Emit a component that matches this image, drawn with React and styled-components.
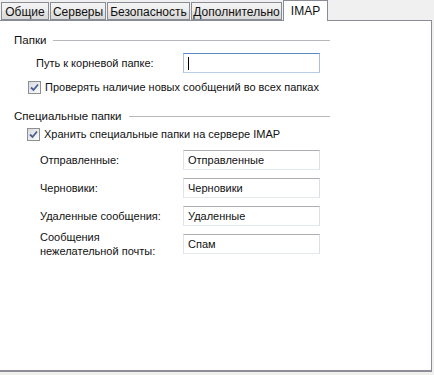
import styled, { createGlobalStyle } from "styled-components";

const GlobalStyle = createGlobalStyle`
  html, body {
    margin: 0;
    padding: 0;
    background: #f0f0f0;
  }
  body {
    font-family: "Liberation Sans", Arial, sans-serif;
    font-size: 11px;
    color: #111;
  }
`;

const Window = styled.div`
  width: 434px;
  height: 375px;
  background: #f0f0f0;
  display: flex;
  flex-direction: column;
`;

const TabStrip = styled.div`
  display: flex;
  align-items: flex-end;
  height: 20px;
  padding-left: 1px;
  position: relative;
  z-index: 1;
`;

const Tab = styled.div`
  box-sizing: border-box;
  width: ${(p) => p.$w}px;
  height: ${(p) => (p.$active ? 21 : 18)}px;
  margin-right: ${(p) => (p.$active ? 0 : 1)}px;
  border: 1px solid #898c95;
  border-bottom: ${(p) => (p.$active ? "none" : "1px solid #898c95")};
  background: ${(p) =>
    p.$active ? "#fff" : "linear-gradient(#f4f4f4, #ededed 50%, #e4e4e4 51%, #dadada)"};
  display: flex;
  align-items: center;
  justify-content: center;
  padding-top: ${(p) => (p.$active ? 0 : 1)}px;
  margin-bottom: ${(p) => (p.$active ? -1 : 0)}px;
  font-size: 12px;
  white-space: nowrap;
`;

const Panel = styled.div`
  box-sizing: border-box;
  width: 432px;
  height: 352px;
  background: #fff;
  border: 1px solid #898c95;
  border-left: none;
  border-bottom: 2px solid #8e8f96;
  padding: 12px 0 0 14px;
`;

const Group = styled.section`
  display: flex;
  flex-direction: column;
  width: 316px;
  margin-bottom: ${(p) => p.$mb || 0}px;
`;

const GroupHeader = styled.div`
  display: flex;
  align-items: center;
  gap: 7px;
  height: 14px;
  font-size: 11.5px;
  white-space: nowrap;

  &::after {
    content: "";
    flex: 1;
    height: 1px;
    background: #b5b8bd;
  }
`;

const FieldGrid = styled.div`
  display: grid;
  grid-template-columns: ${(p) => p.$labelW}px 137px;
  grid-auto-rows: 20px;
  row-gap: 8px;
  padding-left: ${(p) => p.$indent}px;
  margin-top: ${(p) => p.$mt || 0}px;
  align-items: center;
`;

const Label = styled.label`
  line-height: 14px;
  white-space: nowrap;
`;

const TextBox = styled.div`
  box-sizing: border-box;
  height: 20px;
  border: 1px solid ${(p) => (p.$focused ? "#7da2ce" : "#abadb3")};
  border-top-color: ${(p) => (p.$focused ? "#5c8ac4" : "#abadb3")};
  border-left-color: ${(p) => (p.$focused ? "#a4c0e2" : "#e2e3ea")};
  border-right-color: ${(p) => (p.$focused ? "#a4c0e2" : "#dbdfe6")};
  border-bottom-color: ${(p) => (p.$focused ? "#b5cfe7" : "#e3e9ef")};
  background: #fff;
  padding-left: 4px;
  display: flex;
  align-items: center;
`;

const Caret = styled.span`
  width: 1px;
  height: 13px;
  background: #000;
`;

const CheckRow = styled.div`
  display: flex;
  align-items: center;
  gap: 4px;
  height: 14px;
  padding-left: ${(p) => p.$indent}px;
  margin-top: ${(p) => p.$mt}px;
  white-space: nowrap;
`;

const Box = styled.span`
  box-sizing: border-box;
  width: 13px;
  height: 13px;
  border: 1px solid #8e8f8f;
  background: linear-gradient(135deg, #d8dbe0, #fbfbfb);
  display: flex;
  align-items: center;
  justify-content: center;
  flex-shrink: 0;
`;

const Check = () => (
  <Box>
    <svg width="9" height="9" viewBox="0 0 9 9">
      <path d="M1 4.5 L3.5 7 L8 1.5" fill="none" stroke="#4a5f8f" strokeWidth="1.8" />
    </svg>
  </Box>
);

const tabs = [
  { label: "Общие", w: 48 },
  { label: "Серверы", w: 56 },
  { label: "Безопасность", w: 83 },
  { label: "Дополнительно", w: 91 },
  { label: "IMAP", w: 45, active: true },
];

const special = [
  { label: "Отправленные:", value: "Отправленные" },
  { label: "Черновики:", value: "Черновики" },
  { label: "Удаленные сообщения:", value: "Удаленные" },
  { label: ["Сообщения", "нежелательной почты:"], value: "Спам" },
];

export default function App() {
  return (
    <Window>
      <GlobalStyle />
      <TabStrip>
        {tabs.map((t) => (
          <Tab key={t.label} $w={t.w} $active={t.active}>
            {t.label}
          </Tab>
        ))}
      </TabStrip>
      <Panel>
        <Group $mb={15}>
          <GroupHeader>Папки</GroupHeader>
          <FieldGrid $labelW={147} $indent={22} $mt={6}>
            <Label>Путь к корневой папке:</Label>
            <TextBox $focused>
              <Caret />
            </TextBox>
          </FieldGrid>
          <CheckRow $indent={14} $mt={7}>
            <Check />
            Проверять наличие новых сообщений во всех папках
          </CheckRow>
        </Group>
        <Group>
          <GroupHeader>Специальные папки</GroupHeader>
          <CheckRow $indent={13} $mt={4}>
            <Check />
            Хранить специальные папки на сервере IMAP
          </CheckRow>
          <FieldGrid $labelW={143} $indent={26} $mt={9}>
            {special.map((f) => (
              <>
                <Label key={f.value + "l"}>
                  {Array.isArray(f.label) ? (
                    <>
                      {f.label[0]}
                      <br />
                      {f.label[1]}
                    </>
                  ) : (
                    f.label
                  )}
                </Label>
                <TextBox key={f.value}>{f.value}</TextBox>
              </>
            ))}
          </FieldGrid>
        </Group>
      </Panel>
    </Window>
  );
}
